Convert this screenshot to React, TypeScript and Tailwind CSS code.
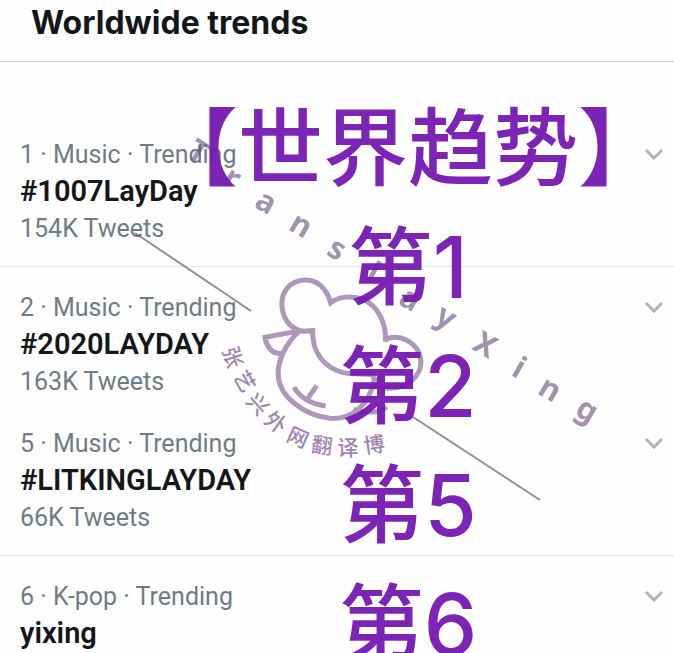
import React from "react";

interface Trend {
  rank: number;
  category: string;
  name: string;
  tweets: string | null;
  divider: boolean;
}

interface Glyph {
  char: string;
  x: number;
  y: number;
  rotate: number;
}

const trends: Trend[] = [
  { rank: 1, category: "Music", name: "#1007LayDay", tweets: "154K Tweets", divider: true },
  { rank: 2, category: "Music", name: "#2020LAYDAY", tweets: "163K Tweets", divider: false },
  { rank: 5, category: "Music", name: "#LITKINGLAYDAY", tweets: "66K Tweets", divider: true },
  { rank: 6, category: "K-pop", name: "yixing", tweets: null, divider: false },
];

const captions = ["【世界趋势】", "第1", "第2", "第5", "第6"];

const latinGlyphs: Glyph[] = [
  { char: "T", x: 197, y: 154, rotate: 32 },
  { char: "r", x: 231, y: 180, rotate: 32 },
  { char: "a", x: 265, y: 204, rotate: 30 },
  { char: "n", x: 300, y: 227, rotate: 30 },
  { char: "s", x: 336, y: 251, rotate: 30 },
  { char: "l", x: 372, y: 275, rotate: 30 },
  { char: "a", x: 409, y: 301, rotate: 30 },
  { char: "y", x: 445, y: 319, rotate: 30 },
  { char: "X", x: 484, y: 347, rotate: 30 },
  { char: "i", x: 518, y: 370, rotate: 30 },
  { char: "n", x: 549, y: 391, rotate: 30 },
  { char: "g", x: 586, y: 412, rotate: 30 },
];

const hanGlyphs: Glyph[] = [
  { char: "张", x: 233, y: 357, rotate: 72 },
  { char: "艺", x: 245, y: 381, rotate: 60 },
  { char: "兴", x: 258, y: 404, rotate: 48 },
  { char: "外", x: 276, y: 422, rotate: 36 },
  { char: "网", x: 298, y: 437, rotate: 24 },
  { char: "翻", x: 322, y: 445, rotate: 8 },
  { char: "译", x: 348, y: 447, rotate: 0 },
  { char: "博", x: 374, y: 444, rotate: -8 },
];

function TrendRow({ trend }: { trend: Trend }) {
  return (
    <li
      className={
        trend.divider
          ? "flex justify-between border-b border-[#e4e6e8] pt-[22px] pr-[10px] pb-[19px] pl-5"
          : "flex justify-between pt-[22px] pr-[10px] pb-[3px] pl-5"
      }
    >
      <div className="text-[25px] leading-[37px]">
        <p className="text-[#6f7b85]">
          {trend.rank} · {trend.category} · Trending
        </p>
        <a href="#" className="block text-[29px] font-semibold text-[#14171a]">
          {trend.name}
        </a>
        {trend.tweets && <p className="text-[#6f7b85]">{trend.tweets}</p>}
      </div>
      <button
        type="button"
        aria-label={`Options for ${trend.name}`}
        className="flex h-[36px] items-center text-[#aab5bd]"
      >
        <svg width="20" height="12" viewBox="0 0 20 12" fill="none">
          <path d="M2 2l8 8 8-8" stroke="currentColor" strokeWidth="3" />
        </svg>
      </button>
    </li>
  );
}

function Captions() {
  return (
    <div className="pointer-events-none absolute top-[89px] left-[153px] flex flex-col items-center font-['Inter','Noto_Sans_CJK_SC',sans-serif] text-[85px] leading-[119px] font-medium whitespace-nowrap text-[#7519b2] opacity-95">
      {captions.map((caption) => (
        <p key={caption}>{caption}</p>
      ))}
    </div>
  );
}

function Watermark() {
  return (
    <svg
      className="pointer-events-none absolute top-0 left-0"
      width="674"
      height="653"
      viewBox="0 0 674 653"
      fill="none"
    >
      <g stroke="#5d4870" strokeWidth="2" opacity="0.65">
        <path d="M135 233L251 311" />
        <path d="M413 417L540 500" />
      </g>
      {/* bear head, ears and beak */}
      <g
        transform="translate(210 260) scale(0.3333)"
        stroke="#6b4480"
        strokeWidth="15"
        opacity="0.55"
      >
        <path d="M522 242C560 215 630 245 633 305C633 350 590 385 540 385C510 385 495 370 488 346M526 244C530 190 505 140 460 118C425 105 385 110 362 128C350 85 320 58 285 60C240 62 212 95 216 140C220 180 245 212 285 214L316 211M308 208C305 280 345 325 400 338C430 345 460 340 490 345M270 212C225 250 200 310 205 350C210 410 280 465 360 475C420 480 480 440 495 350M272 212L165 232C170 262 190 285 214 280M252 382C270 412 300 432 347 438M320 377L292 418M430 448C470 460 510 460 530 440" />
      </g>
      <g
        className="font-['Noto_Sans',sans-serif] text-[31px] font-bold"
        fill="#634c7c"
        opacity="0.6"
        textAnchor="middle"
      >
        {latinGlyphs.map((g) => (
          <text key={g.x} y="8" transform={`translate(${g.x} ${g.y}) rotate(${g.rotate})`}>
            {g.char}
          </text>
        ))}
      </g>
      <g
        className="font-['Noto_Sans_CJK_SC',sans-serif] text-[21px] font-medium"
        fill="#6f4486"
        opacity="0.65"
        textAnchor="middle"
      >
        {hanGlyphs.map((g) => (
          <text key={g.x} y="8" transform={`translate(${g.x} ${g.y}) rotate(${g.rotate})`}>
            {g.char}
          </text>
        ))}
      </g>
    </svg>
  );
}

export default function App() {
  return (
    <main className="relative h-screen overflow-hidden bg-[#fefefe] font-['Roboto',sans-serif]">
      <header className="border-b border-[#d0d3d6] px-[31px] pt-[5px] pb-5">
        <h1 className="font-['Inter',sans-serif] text-[32px] leading-9 font-bold text-[#14171a]">
          Worldwide trends
        </h1>
      </header>
      <ul className="pt-[52px]">
        {trends.map((trend) => (
          <TrendRow key={trend.rank} trend={trend} />
        ))}
      </ul>
      <Watermark />
      <Captions />
    </main>
  );
}
